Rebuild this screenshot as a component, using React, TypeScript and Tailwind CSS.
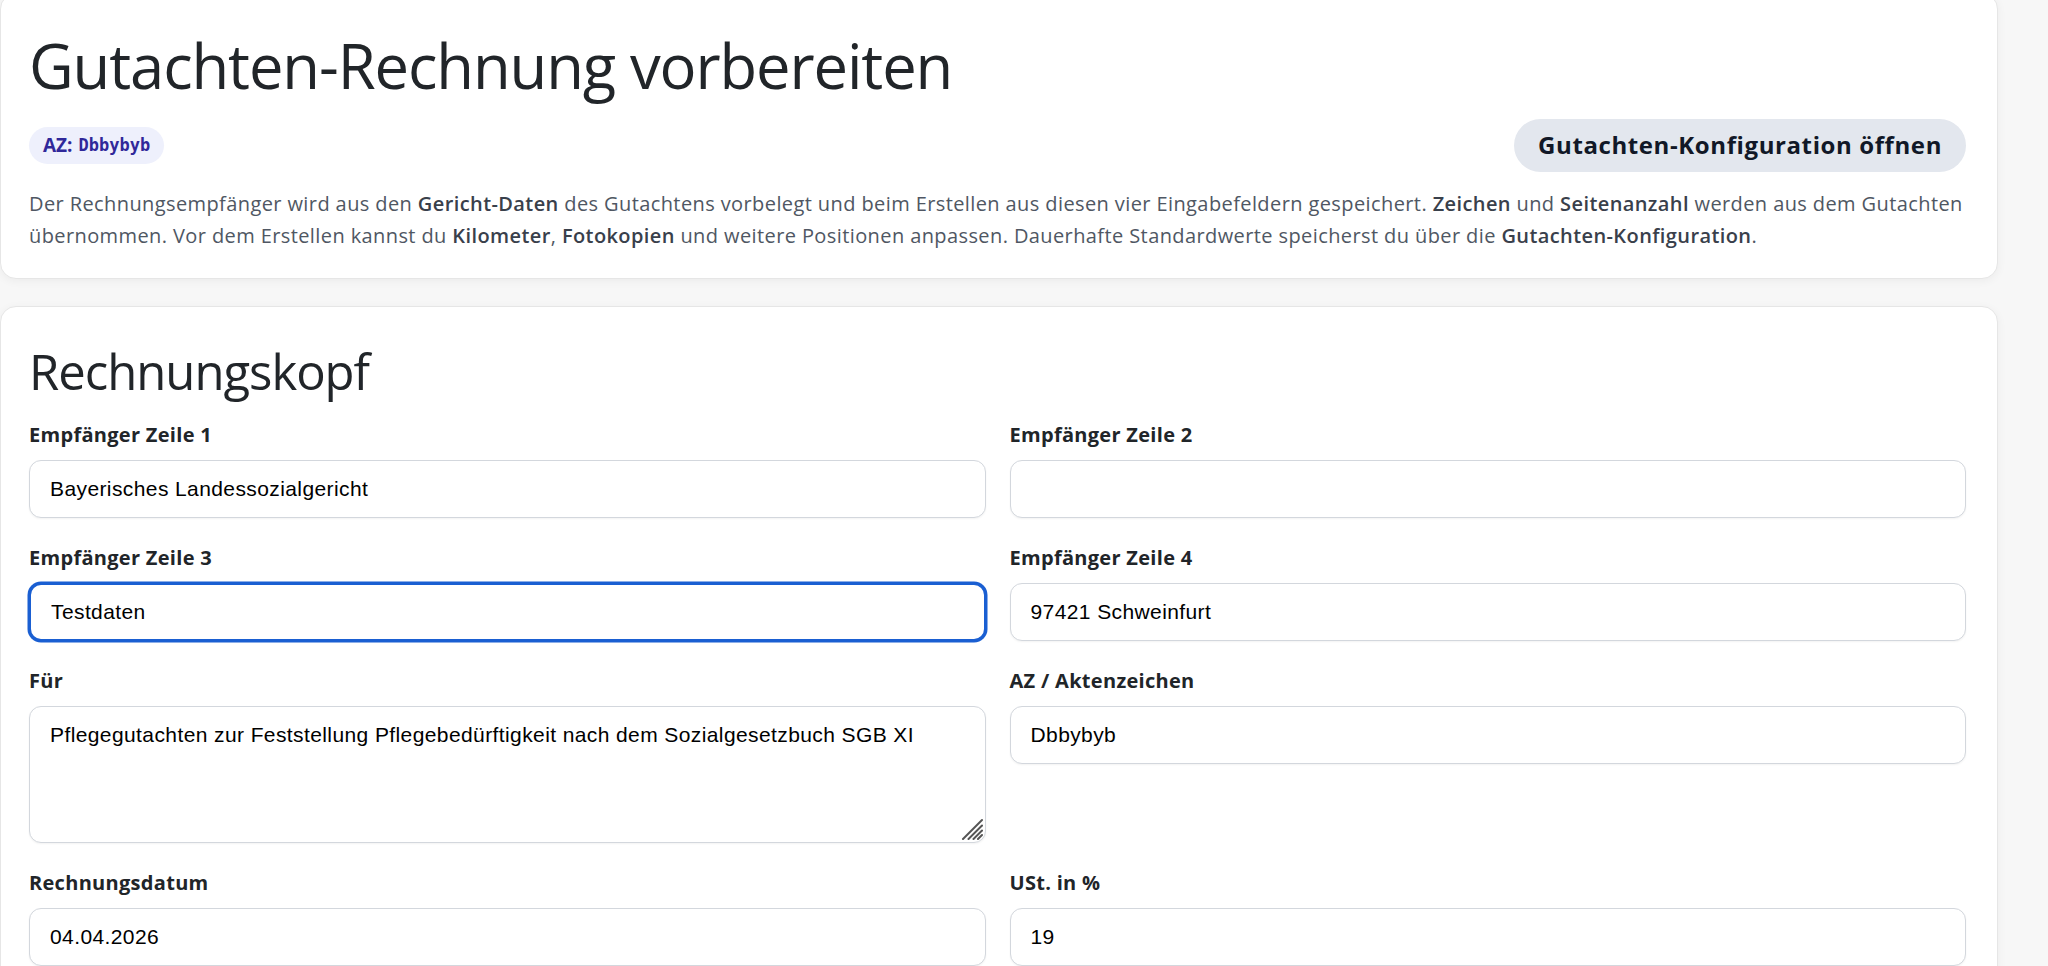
const sans = "font-['Open_Sans',sans-serif]";

type Field = {
  label: string;
  value: string;
  textarea?: boolean;
  focused?: boolean;
};

const fields: Field[] = [
  { label: "Empfänger Zeile 1", value: "Bayerisches Landessozialgericht" },
  { label: "Empfänger Zeile 2", value: "" },
  { label: "Empfänger Zeile 3", value: "Testdaten", focused: true },
  { label: "Empfänger Zeile 4", value: "97421 Schweinfurt" },
  {
    label: "Für",
    value: "Pflegegutachten zur Feststellung Pflegebedürftigkeit nach dem Sozialgesetzbuch SGB XI",
    textarea: true,
  },
  { label: "AZ / Aktenzeichen", value: "Dbbybyb" },
  { label: "Rechnungsdatum", value: "04.04.2026" },
  { label: "USt. in %", value: "19" },
];

function Strong({ children }: { children: React.ReactNode }) {
  return <strong className="font-semibold text-[#39404b]">{children}</strong>;
}

// windows-style resize grip drawn over the textarea corner
function ResizeGrip() {
  return (
    <svg
      className="pointer-events-none absolute right-[3px] bottom-[3px] h-[22px] w-[22px]"
      viewBox="0 0 22 22"
      aria-hidden
    >
      <g stroke="#555" strokeWidth="2" strokeLinecap="round">
        <line x1="2" y1="21" x2="21" y2="2" />
        <line x1="7.5" y1="21" x2="21" y2="7.5" />
        <line x1="12.5" y1="21" x2="21" y2="12.5" />
        <line x1="17" y1="21" x2="21" y2="17" />
      </g>
    </svg>
  );
}

function FormField({ field }: { field: Field }) {
  const control =
    "w-full bg-white px-[20px] font-['Liberation_Sans',Arial,sans-serif] text-[21px] tracking-[0.4px] text-black outline-none";
  const border = field.focused
    ? "border-2 border-[#1a5fd2] shadow-[0_0_0_1.5px_#1a5fd2]"
    : "border border-[#d3d7dd] shadow-[0_1px_2px_rgba(0,0,0,0.05)]";

  return (
    <div className="flex flex-col">
      <label className={`mb-[10px] ${sans} text-[20px] leading-[30px] font-bold tracking-[0.3px] text-[#212529]`}>
        {field.label}
      </label>
      {field.textarea ? (
        <div className="relative">
          <textarea
            defaultValue={field.value}
            className={`${control} ${border} block h-[137px] resize-none rounded-[12px] pt-[16px] leading-[1.15]`}
          />
          <ResizeGrip />
        </div>
      ) : (
        <input
          type="text"
          defaultValue={field.value}
          className={`${control} ${border} h-[58px] rounded-[12px]`}
        />
      )}
    </div>
  );
}

export default function App() {
  return (
    <div className={`min-h-screen bg-[#f7f7f7] pr-[50px] pb-10 ${sans}`}>
      <section className="-mt-[7px] rounded-[16px] border border-[#e6e6e6] bg-white pt-[35px] pr-[31px] pb-[26px] pl-[28px] shadow-[0_2px_10px_rgba(0,0,0,0.05)]">
        <h1 className="text-[61.5px] leading-[1.2] font-normal tracking-[-1.1px] text-[#212529]">
          Gutachten-Rechnung vorbereiten
        </h1>

        <div className="mt-4 flex h-[53px] items-center justify-between">
          <span className="flex h-[37px] items-center gap-[6px] rounded-full bg-[#eef0fc] pr-[14px] pl-[14px] text-[#30289a]">
            <span className="text-[19px] font-bold">AZ:</span>
            <span className="font-['DejaVu_Sans_Mono',monospace] text-[17px] font-semibold">Dbbybyb</span>
          </span>
          <button
            type="button"
            className="h-[53px] rounded-full bg-[#e3e7ee] px-6 text-[24px] font-bold tracking-[0.6px] text-[#111827]"
          >
            Gutachten-Konfiguration öffnen
          </button>
        </div>

        <p className="mt-4 text-[20px] leading-[32px] tracking-[0.4px] text-[#4f5763]">
          Der Rechnungsempfänger wird aus den <Strong>Gericht-Daten</Strong> des Gutachtens vorbelegt und beim
          Erstellen aus diesen vier Eingabefeldern gespeichert. <Strong>Zeichen</Strong> und{" "}
          <Strong>Seitenanzahl</Strong> werden aus dem Gutachten
          <br />
          übernommen. Vor dem Erstellen kannst du <Strong>Kilometer</Strong>, <Strong>Fotokopien</Strong> und weitere
          Positionen anpassen. Dauerhafte Standardwerte speicherst du über die{" "}
          <Strong>Gutachten-Konfiguration</Strong>.
        </p>
      </section>

      <section className="mt-[27px] rounded-[16px] border border-[#e6e6e6] bg-white pt-[35px] pr-[31px] pb-[40px] pl-[28px] shadow-[0_2px_10px_rgba(0,0,0,0.05)]">
        <h2 className="mb-[19px] text-[49px] leading-[1.2] font-normal tracking-[-1px] text-[#212529]">Rechnungskopf</h2>
        <div className="grid grid-cols-2 gap-x-[24px] gap-y-[25px]">
          {fields.map((f) => (
            <FormField key={f.label} field={f} />
          ))}
        </div>
      </section>
    </div>
  );
}
